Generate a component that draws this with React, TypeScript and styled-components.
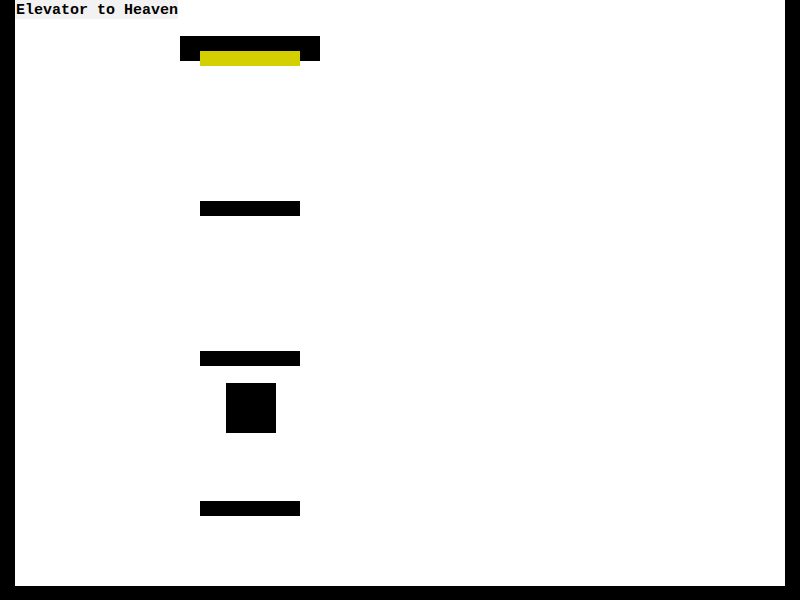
import React from "react";
import styled, { createGlobalStyle } from "styled-components";

const Global = createGlobalStyle`
  html, body { margin: 0; padding: 0; background: #000; }
  body { width: 800px; height: 600px; overflow: hidden; }
`;

const Frame = styled.div`
  width: 800px;
  height: 600px;
  background: #000;
  padding: 0 15px 14px 15px;
  box-sizing: border-box;
`;

const Stage = styled.div`
  position: relative;
  width: 770px;
  height: 586px;
  background: #fff;
  overflow: hidden;
`;

const Title = styled.span`
  display: inline-block;
  font-family: "Liberation Mono", "Courier New", monospace;
  font-weight: bold;
  font-size: 15px;
  line-height: 17px;
  padding: 2px 0 0 1px;
  color: #000;
  background: #f2f2f2;
`;

const Block = styled.div<{ $x: number; $y: number; $w: number; $h: number; $c?: string }>`
  position: absolute;
  left: ${(p) => p.$x}px;
  top: ${(p) => p.$y}px;
  width: ${(p) => p.$w}px;
  height: ${(p) => p.$h}px;
  background: ${(p) => p.$c ?? "#000"};
`;

const floors = [51, 201, 351, 501];

export default function App() {
  return (
    <>
      <Global />
      <Frame>
        <Stage>
          <Title>Elevator to Heaven</Title>
          <Block $x={165} $y={36} $w={140} $h={25} />
          {floors.map((y, i) => (
            <Block key={y} $x={185} $y={y} $w={100} $h={15} $c={i === 0 ? "#d4d000" : "#000"} />
          ))}
          <Block $x={211} $y={383} $w={50} $h={50} />
        </Stage>
      </Frame>
    </>
  );
}
